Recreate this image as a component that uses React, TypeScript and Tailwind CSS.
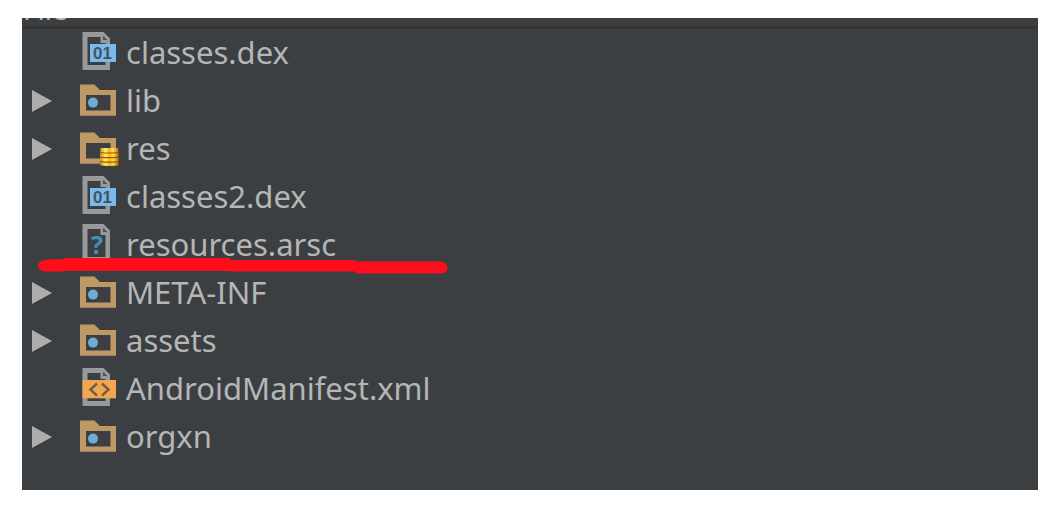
import React from "react";

type Kind = "dex" | "folder" | "resources" | "unknown" | "xml";

interface Entry {
  name: string;
  kind: Kind;
  marked?: boolean;
}

const entries: Entry[] = [
  { name: "classes.dex", kind: "dex" },
  { name: "lib", kind: "folder" },
  { name: "res", kind: "resources" },
  { name: "classes2.dex", kind: "dex" },
  { name: "resources.arsc", kind: "unknown", marked: true },
  { name: "META-INF", kind: "folder" },
  { name: "assets", kind: "folder" },
  { name: "AndroidManifest.xml", kind: "xml" },
  { name: "orgxn", kind: "folder" },
];

function Sheet() {
  return (
    <>
      <path
        fillRule="evenodd"
        fill="#97999a"
        d="M4.500 3H25.500L32 9.500V41H4.500ZM9.500 8V36H27.500V14H22.500V8Z"
      />
      <path d="M25 6.800L29.200 11H25Z" fill="#4b4e50" />
    </>
  );
}

function Folder() {
  return (
    <path
      fillRule="evenodd"
      fill="#be9866"
      d="M2 7.500H16.500L22 13H38V38.700H2ZM8 18V33.500H32.500V18Z"
    />
  );
}

function Coins() {
  return (
    <>
      <defs>
        <linearGradient id="gold" x1="0" x2="1" y1="0" y2="0">
          <stop offset="0" stopColor="#d58a12" />
          <stop offset="0.3" stopColor="#fff07a" />
          <stop offset="0.5" stopColor="#f2b41c" />
          <stop offset="0.72" stopColor="#ffe04a" />
          <stop offset="1" stopColor="#b86a08" />
        </linearGradient>
      </defs>
      <path d="M22 23H40.500V40.500Q31 42 22 40.500Z" fill="#9c5808" />
      <path
        d="M22.500 23H40V27Q31 28 22.500 27ZM22 28Q31 29 40.500 28V31.500Q31 32.500 22 31.500ZM22 32.700Q31 33.700 40.500 32.700V36Q31 37 22 36ZM22.500 37.200Q31 38.200 40 37.200V40.300Q31 41.800 22.500 40.300Z"
        fill="url(#gold)"
      />
    </>
  );
}

function FileIcon({ kind }: { kind: Kind }) {
  return (
    <svg viewBox="0 0 42 48" className="h-12 w-[42px] shrink-0" aria-hidden="true">
      {kind === "folder" || kind === "resources" ? <Folder /> : <Sheet />}
      {kind === "folder" && <circle cx="15" cy="25.600" r="5" fill="#6fabcf" />}
      {kind === "resources" && <Coins />}
      {kind === "dex" && (
        <>
          <rect x="12" y="15" width="26" height="18" fill="#79b9ee" />
          <text
            x="24.500"
            y="30"
            textAnchor="middle"
            fill="#46525d"
            className="font-['Liberation_Sans',sans-serif] text-[17px] font-bold"
          >
            01
          </text>
        </>
      )}
      {kind === "unknown" && (
        <text
          x="19"
          y="33"
          textAnchor="middle"
          fill="#4590bb"
          className="font-['Open_Sans',sans-serif] text-[25px] font-bold"
        >
          ?
        </text>
      )}
      {kind === "xml" && (
        <>
          <rect x="4.500" y="15" width="33.500" height="18.300" fill="#f2a650" />
          <path
            d="M19 18.500L12.500 24.600L19 30.700M24 18.500L30.500 24.600L24 30.700"
            fill="none"
            stroke="#735c45"
            strokeWidth="2.500"
          />
        </>
      )}
    </svg>
  );
}

function Marker() {
  return (
    <svg
      viewBox="0 0 410 18"
      className="pointer-events-none absolute top-9 left-4 h-[18px] w-[410px]"
      aria-hidden="true"
    >
      <path
        d="M6 3L10 2.500L26 2V1H192V3H318V4.500H404Q410 7 409.500 11Q409 16 404 16.500H318L317 14.500H192V14H27V14.500H6Q0 13 0 8.500Q0 5 6 3Z"
        fill="#fe0e1a"
      />
    </svg>
  );
}

function Row({ entry }: { entry: Entry }) {
  const expandable = entry.kind === "folder" || entry.kind === "resources";
  return (
    <li className="relative flex h-12 items-center pl-[10px]">
      <div className="flex w-[46px] shrink-0 items-center">
        {expandable && (
          <button type="button" aria-label={`Expand ${entry.name}`} className="h-6 w-5">
            <svg viewBox="0 0 20 24" className="h-6 w-5" aria-hidden="true">
              <path d="M0 1L20 12L0 23Z" fill="#adadad" />
            </svg>
          </button>
        )}
      </div>
      <FileIcon kind={entry.kind} />
      <span className="pb-[3px] pl-[6px] leading-10 whitespace-nowrap">{entry.name}</span>
      {entry.marked && <Marker />}
    </li>
  );
}

export default function App() {
  return (
    <main className="min-h-screen bg-white py-[18px] pr-[18px] pl-[22px] font-['Noto_Sans','Open_Sans',sans-serif] text-[31px] text-[#b4b6b7]">
      <section className="bg-[#3c3f41] pb-[29px]">
        <header className="flex h-[11px] items-end overflow-hidden border-b-3 border-[#323435] bg-[#3c3e3f] pb-[3px] pl-px">
          <span className="text-[28px] leading-7">File</span>
        </header>
        <ul>
          {entries.map((entry) => (
            <Row key={entry.name} entry={entry} />
          ))}
        </ul>
      </section>
    </main>
  );
}
